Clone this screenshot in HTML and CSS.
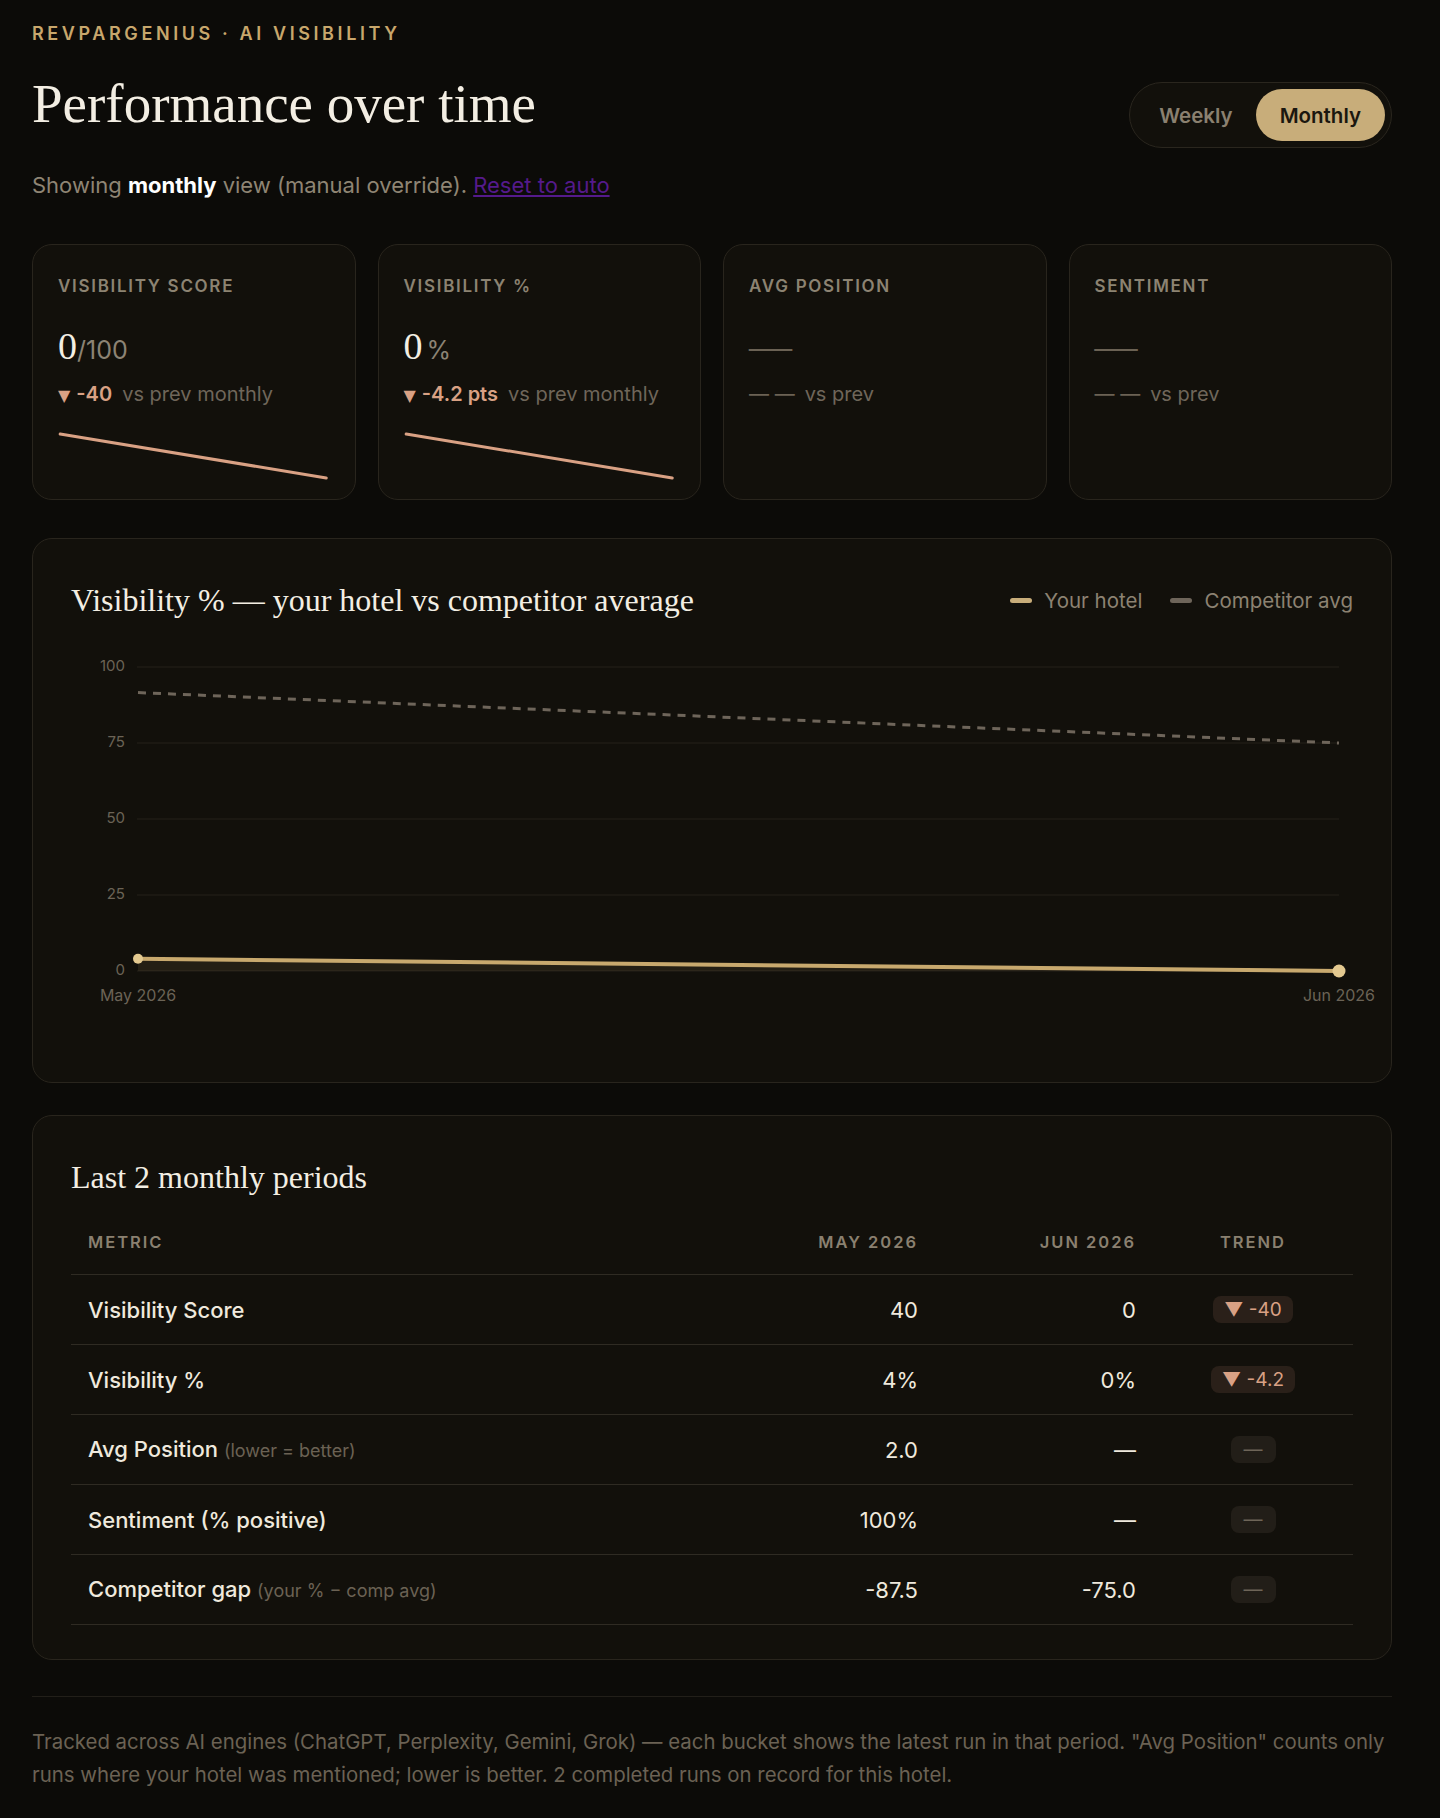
FILE: index.html
```html
<!DOCTYPE html>
<html lang="en">
<head>
<meta charset="utf-8">
<title>Performance over time · AI Visibility</title>
<link rel="stylesheet" href="styles.css">
</head>
<body>
<main class="page">
  <header class="page-head">
    <div class="eyebrow">RevPARGenius · AI Visibility</div>
    <div class="title-row">
      <h1 class="title">Performance over time</h1>
      <div class="toggle">
        <button class="toggle-btn">Weekly</button>
        <button class="toggle-btn is-active">Monthly</button>
      </div>
    </div>
    <p class="subtitle">Showing <strong>monthly</strong> view (manual override). <a class="reset-link" href="">Reset to auto</a></p>
  </header>

  <section class="stats">
    <div class="stat-card">
      <div class="stat-label">Visibility Score</div>
      <div class="stat-value"><span class="num">0</span><span class="unit">/100</span></div>
      <div class="stat-delta"><span class="arrow">▼</span><span class="delta-num">-40</span><span class="delta-note">vs prev monthly</span></div>
      <svg class="spark" viewBox="0 0 100 48" preserveAspectRatio="none"><line x1="0.8" y1="2" x2="98.8" y2="46" vector-effect="non-scaling-stroke"/></svg>
    </div>
    <div class="stat-card">
      <div class="stat-label">Visibility %</div>
      <div class="stat-value"><span class="num">0</span><span class="unit unit-pct">%</span></div>
      <div class="stat-delta"><span class="arrow">▼</span><span class="delta-num">-4.2 pts</span><span class="delta-note">vs prev monthly</span></div>
      <svg class="spark" viewBox="0 0 100 48" preserveAspectRatio="none"><line x1="0.8" y1="2" x2="98.8" y2="46" vector-effect="non-scaling-stroke"/></svg>
    </div>
    <div class="stat-card">
      <div class="stat-label">Avg Position</div>
      <div class="stat-value is-empty">—</div>
      <div class="stat-delta"><span class="delta-empty">— —</span><span class="delta-note">vs prev</span></div>
    </div>
    <div class="stat-card">
      <div class="stat-label">Sentiment</div>
      <div class="stat-value is-empty">—</div>
      <div class="stat-delta"><span class="delta-empty">— —</span><span class="delta-note">vs prev</span></div>
    </div>
  </section>

  <section class="panel chart-panel">
    <div class="panel-head">
      <h2 class="panel-title">Visibility % — your hotel vs competitor average</h2>
      <div class="legend">
        <span class="legend-item"><span class="swatch swatch-hotel"></span>Your hotel</span>
        <span class="legend-item"><span class="swatch swatch-comp"></span>Competitor avg</span>
      </div>
    </div>
    <svg class="chart" viewBox="0 0 1282 403">
      <g class="grid">
        <line x1="66" y1="27" x2="1268" y2="27"/>
        <line x1="66" y1="103" x2="1268" y2="103"/>
        <line x1="66" y1="179" x2="1268" y2="179"/>
        <line x1="66" y1="255" x2="1268" y2="255"/>
        <line x1="66" y1="331" x2="1268" y2="331"/>
      </g>
      <g class="y-labels">
        <text x="54" y="27">100</text>
        <text x="54" y="103">75</text>
        <text x="54" y="179">50</text>
        <text x="54" y="255">25</text>
        <text x="54" y="331">0</text>
      </g>
      <g class="x-labels">
        <text x="67" y="361">May 2026</text>
        <text x="1268" y="361">Jun 2026</text>
      </g>
      <polygon class="hotel-area" points="67,318.8 1268,331 1268,331 67,331"/>
      <line class="comp-line" x1="67" y1="52.6" x2="1268" y2="103"/>
      <line class="hotel-line" x1="67" y1="318.8" x2="1268" y2="331"/>
      <circle class="hotel-dot" cx="67" cy="318.8" r="5"/>
      <circle class="hotel-dot" cx="1268" cy="331" r="6.5"/>
    </svg>
  </section>

  <section class="panel table-panel">
    <h2 class="panel-title">Last 2 monthly periods</h2>
    <table class="periods">
      <colgroup>
        <col>
        <col class="col-num">
        <col class="col-jun">
        <col class="col-trend">
      </colgroup>
      <thead>
        <tr>
          <th class="left">Metric</th>
          <th class="right">May 2026</th>
          <th class="right">Jun 2026</th>
          <th class="center">Trend</th>
        </tr>
      </thead>
      <tbody>
        <tr>
          <td class="left">Visibility Score</td>
          <td class="right">40</td>
          <td class="right">0</td>
          <td class="center"><span class="badge badge-down">▼ -40</span></td>
        </tr>
        <tr>
          <td class="left">Visibility %</td>
          <td class="right">4%</td>
          <td class="right">0%</td>
          <td class="center"><span class="badge badge-down">▼ -4.2</span></td>
        </tr>
        <tr>
          <td class="left">Avg Position <span class="hint">(lower = better)</span></td>
          <td class="right">2.0</td>
          <td class="right">—</td>
          <td class="center"><span class="badge badge-flat">—</span></td>
        </tr>
        <tr>
          <td class="left">Sentiment (% positive)</td>
          <td class="right">100%</td>
          <td class="right">—</td>
          <td class="center"><span class="badge badge-flat">—</span></td>
        </tr>
        <tr>
          <td class="left">Competitor gap <span class="hint">(your % − comp avg)</span></td>
          <td class="right">-87.5</td>
          <td class="right">-75.0</td>
          <td class="center"><span class="badge badge-flat">—</span></td>
        </tr>
      </tbody>
    </table>
  </section>

  <footer class="foot">
    <p>Tracked across AI engines (ChatGPT, Perplexity, Gemini, Grok) — each bucket shows the latest run in that period. "Avg Position" counts only runs where your hotel was mentioned; lower is better. 2 completed runs on record for this hotel.</p>
  </footer>
</main>
</body>
</html>
```

FILE: styles.css
```css
* { box-sizing: border-box; }

html, body {
  margin: 0;
  background: #0c0b08;
}

body {
  font-family: Inter, "Noto Sans", sans-serif;
  color: #efe9dd;
}

.page {
  padding: 23px 48px 28px 32px;
}

/* ---------- header ---------- */
.eyebrow {
  font-size: 18px;
  line-height: 22px;
  font-weight: 600;
  letter-spacing: 0.2em;
  text-transform: uppercase;
  color: #c8a76c;
}

.title-row {
  display: flex;
  justify-content: space-between;
  align-items: flex-start;
  margin-top: 29px;
}

.title {
  margin: 0;
  font-family: "Liberation Serif", serif;
  font-weight: 400;
  font-size: 55px;
  line-height: 60px;
  color: #f3eee3;
}

.toggle {
  display: inline-flex;
  margin-top: 8px;
  padding: 6px;
  border: 1px solid #2a261e;
  border-radius: 999px;
  background: #12100b;
}

.toggle-btn {
  height: 52px;
  padding: 0 23px;
  border: 0;
  border-radius: 999px;
  background: transparent;
  font-family: Inter, sans-serif;
  font-size: 20.5px;
  font-weight: 600;
  color: #8a8070;
}

.toggle-btn.is-active {
  padding: 0 24px;
  background: #c8ad7a;
  color: #1b170f;
}

.subtitle {
  margin: 22px 0 0;
  font-size: 22px;
  line-height: 30px;
  color: #8f8574;
}

.subtitle strong {
  color: #ffffff;
  font-weight: 700;
}

.reset-link {
  color: #551a8b;
  text-decoration: underline;
}

/* ---------- stat cards ---------- */
.stats {
  display: grid;
  grid-template-columns: repeat(4, 1fr);
  gap: 22px;
  margin-top: 44px;
}

.stat-card {
  padding: 31px 25px 19px;
  border: 1px solid #29251d;
  border-radius: 20px;
  background: #12100b;
}

.stat-label {
  font-size: 17px;
  line-height: 20px;
  font-weight: 600;
  letter-spacing: 0.1em;
  text-transform: uppercase;
  color: #8c8372;
}

.stat-value {
  display: flex;
  align-items: baseline;
  margin-top: 28px;
  height: 44px;
  line-height: 44px;
}

.stat-value .num {
  font-family: "Liberation Serif", serif;
  font-size: 38px;
  color: #f3eee3;
}

.stat-value .unit {
  font-size: 25px;
  color: #8c8374;
}

.stat-value .unit-pct {
  margin-left: 4px;
}

.stat-value.is-empty {
  font-family: "Liberation Serif", serif;
  font-size: 43px;
  color: #6b6254;
}

.stat-delta {
  display: flex;
  align-items: baseline;
  margin-top: 12px;
  font-size: 20px;
  line-height: 28px;
}

.arrow {
  font-family: "DejaVu Sans", sans-serif;
  font-size: 16px;
  color: #d9a184;
  margin-right: 6px;
}

.delta-num {
  font-weight: 600;
  color: #d9a184;
  margin-right: 10px;
}

.delta-empty {
  color: #6b6254;
  margin-right: 10px;
}

.delta-note {
  color: #6f665a;
}

.spark {
  display: block;
  width: 100%;
  height: 48px;
  margin-top: 22px;
  overflow: visible;
}

.spark line {
  stroke: #d9a184;
  stroke-width: 3;
  stroke-linecap: round;
}

/* ---------- panels ---------- */
.panel {
  border: 1px solid #29251d;
  border-radius: 20px;
  background: #12100b;
  padding: 39px 38px 39px;
}

.chart-panel {
  margin-top: 38px;
}

.table-panel {
  margin-top: 32px;
  padding-bottom: 34px;
}

.panel-head {
  display: flex;
  justify-content: space-between;
  align-items: center;
}

.panel-title {
  margin: 0;
  font-family: "Liberation Serif", serif;
  font-weight: 400;
  font-size: 32px;
  line-height: 44px;
  color: #f3eee3;
}

.legend {
  display: flex;
  gap: 28px;
  font-size: 20.5px;
  color: #8c8272;
}

.legend-item {
  display: inline-flex;
  align-items: center;
}

.swatch {
  width: 22px;
  height: 5px;
  border-radius: 3px;
  margin-right: 12px;
}

.swatch-hotel { background: #c8ad7a; }
.swatch-comp { background: #6e655a; }

.chart {
  display: block;
  width: 100%;
  height: 403px;
  margin-top: 18px;
  overflow: visible;
}

.grid line {
  stroke: #24211a;
  stroke-width: 1;
}

.y-labels text {
  font-family: Inter, sans-serif;
  font-size: 15px;
  fill: #6b6356;
  text-anchor: end;
  dominant-baseline: middle;
}

.x-labels text {
  font-family: Inter, sans-serif;
  font-size: 16px;
  fill: #6b6356;
  text-anchor: middle;
}

.comp-line {
  stroke: #6e655a;
  stroke-width: 3;
  stroke-dasharray: 8 7;
}

.hotel-area {
  fill: rgba(200, 169, 110, 0.1);
}

.hotel-line {
  stroke: #c8a96e;
  stroke-width: 4;
  stroke-linecap: round;
}

.hotel-dot {
  fill: #e3c990;
}

/* ---------- table ---------- */
.periods {
  width: 100%;
  margin-top: 12px;
  border-collapse: collapse;
  table-layout: fixed;
}

.col-num { width: 220px; }
.col-jun { width: 218px; }
.col-trend { width: 200px; }

.periods th {
  padding: 22px 17px;
  font-size: 16.5px;
  line-height: 19px;
  font-weight: 600;
  letter-spacing: 0.12em;
  text-transform: uppercase;
  color: #8a8070;
  border-bottom: 1px solid #2f2b23;
}

.periods td {
  height: 70px;
  padding: 0 17px;
  font-size: 22px;
  line-height: 28px;
  color: #efe9dd;
  vertical-align: middle;
  border-bottom: 1px solid #2f2b23;
}

.periods td.left {
  font-weight: 500;
}

.left { text-align: left; }
.right { text-align: right; }
.center { text-align: center; }

.hint {
  font-size: 18px;
  font-weight: 400;
  color: #6b6254;
}

.badge {
  display: inline-block;
  padding: 0 11px;
  border-radius: 8px;
  font-size: 19px;
  line-height: 27px;
  vertical-align: top;
}

.badge-down {
  background: #2a2019;
  color: #d9a184;
}

.badge-flat {
  min-width: 45px;
  background: #221e18;
  color: #6e6558;
}

/* ---------- footer ---------- */
.foot {
  margin-top: 36px;
  border-top: 1px solid #221f19;
}

.foot p {
  margin: 28px 0 0;
  font-size: 20.4px;
  line-height: 33px;
  color: #6b6254;
}
```
